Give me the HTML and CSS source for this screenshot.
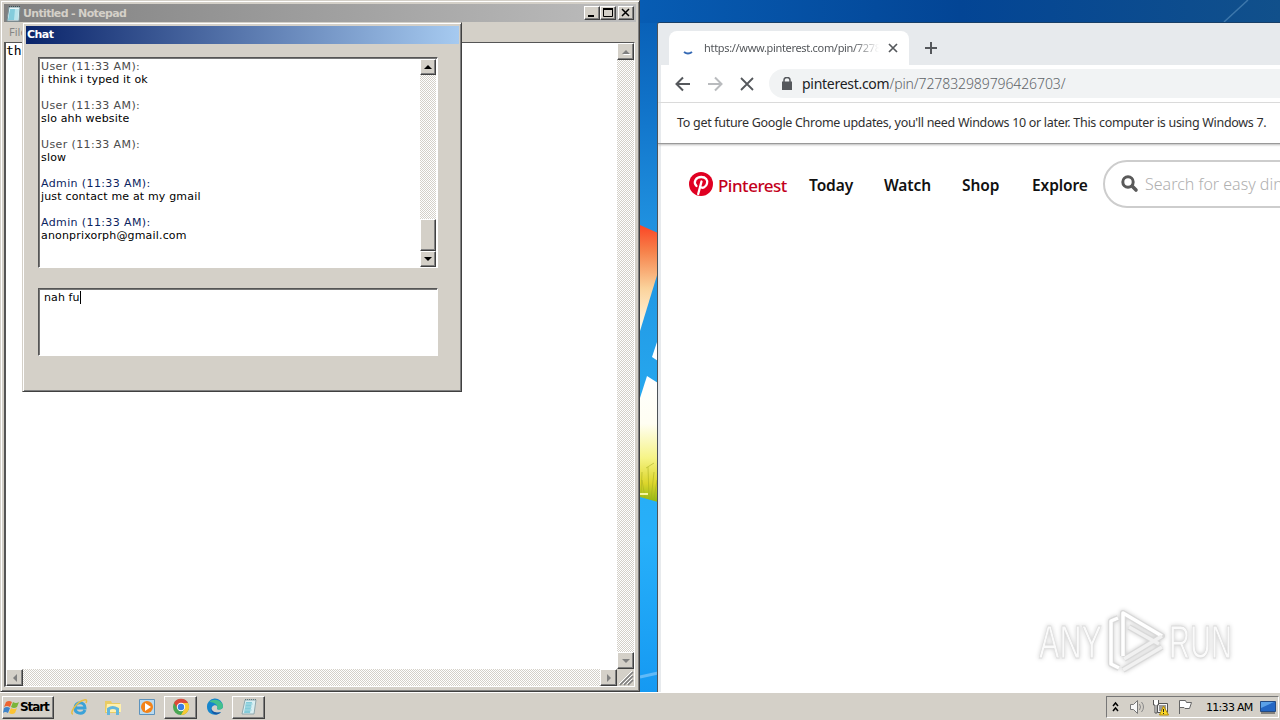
FILE: index.html
```
<!DOCTYPE html>
<html lang="en">
<head>
<meta charset="utf-8">
<title>Desktop</title>
<link rel="stylesheet" href="styles.css">
</head>
<body>
<div class="desktop">
  <svg class="wallpaper" width="1280" height="692" viewBox="0 0 1280 692">
    <defs>
      <linearGradient id="sky" x1="0" y1="0" x2="0" y2="1"><stop offset="0" stop-color="#075cb3"/><stop offset=".16" stop-color="#1174ca"/><stop offset=".32" stop-color="#1f90df"/><stop offset=".6" stop-color="#27aaf0"/><stop offset=".78" stop-color="#27b0fa"/><stop offset="1" stop-color="#1599f2"/></linearGradient>
      <linearGradient id="top"><stop offset="0" stop-color="#075cb3"/><stop offset=".5" stop-color="#034595"/><stop offset="1" stop-color="#11508b"/></linearGradient>
      <linearGradient id="red" x1="0" y1="0" x2="0" y2="1"><stop offset="0" stop-color="#fb4525"/><stop offset=".25" stop-color="#f6824b"/><stop offset=".6" stop-color="#fbd39c"/><stop offset="1" stop-color="#fffceb"/></linearGradient>
      <linearGradient id="yellow" x1="0" y1="0" x2="0" y2="1"><stop offset="0" stop-color="#fff"/><stop offset=".38" stop-color="#fffef2"/><stop offset=".65" stop-color="#f6f487"/><stop offset=".85" stop-color="#dcd62c"/><stop offset="1" stop-color="#8fb713"/></linearGradient>
    </defs>
    <path fill="url(#sky)" d="M640 0h18v692h-18z"/>
    <path fill="url(#top)" d="M640 0h640v23H640z"/>
    <path d="M1224 22L1248 0" stroke="#3d77ab" stroke-width="1.5"/>
    <path fill="url(#red)" d="M640 225l18 8v39l-18 59z"/>
    <path fill="#fff" d="M652 357l6-18v22z"/>
    <path fill="url(#yellow)" d="M640 398l7-22 11 7v119l-18-5z"/>
    <path d="M641 497l1-25m3 26l-3-18m7 19l-1-32m3 33l3-28m0 28l3-20M646 468l8-5" fill="none" stroke="#a8ae20" stroke-width=".8" opacity=".7"/>
    <path d="M640 494h8" stroke="#f5f5a0" stroke-width="2"/>
    <path d="M640 677l18-4" stroke="#60baf8" stroke-width="3"/>
  </svg>

  <section class="notepad">
    <header class="np-title">
      <svg width="16" height="17" viewBox="0 0 16 17"><path fill="#e9f6f8" stroke="#77919a" d="M3 2h11l-1 14H1z"/><path fill="#83ccdc" d="M4 4h6L9 15H2z"/><path fill="#b9e4ec" d="M9 4h4l-1 11H8z"/><path stroke="#404e52" stroke-dasharray="1 1" d="M3 1.500h12"/></svg>
      <span class="np-name">Untitled - Notepad</span>
      <div class="win-btns">
        <button class="btn3d"><svg width="14" height="12"><path fill="#000" d="M3 8h6v2H3z"/></svg></button>
        <button class="btn3d"><svg width="14" height="12"><path fill="none" stroke="#000" d="M2.500 2v7.500h9V1.500"/><path fill="#000" d="M2 1h10v2H2z"/></svg></button>
        <button class="btn3d close"><svg width="14" height="12"><path stroke="#000" stroke-width="1.500" d="M3 2l7 7M10 2L3 9"/></svg></button>
      </div>
    </header>
    <nav class="np-menu">File</nav>
    <div class="np-edit">
      <div class="np-text">this</div>
      <div class="track v"><i class="btn3d"><svg width="14" height="14"><path fill="#fff" d="M4 10h8L8 6z"/><path fill="#808080" d="M3 9h8L7 5z"/></svg></i><i class="btn3d"><svg width="14" height="14"><path fill="#808080" d="M3 5h8L7 9z"/></svg></i></div>
      <div class="track h"><i class="btn3d"><svg width="14" height="14"><path fill="#808080" d="M9 3v8L5 7z"/></svg></i><i class="btn3d"><svg width="14" height="14"><path fill="#808080" d="M5 3v8l4-4z"/></svg></i></div>
      <svg class="grip" width="17" height="17"><path stroke="#fff" d="M2 15L15 2M6 15l9-9M10 15l5-5"/><path stroke="#808080" stroke-width="1.600" d="M3 16L16 3M7 16l9-9M11 16l5-5"/></svg>
    </div>
  </section>

  <section class="chat">
    <header class="chat-title">Chat</header>
    <div class="chat-body">
      <div class="log sunken">
        <div class="messages">
          <p><b class="user">User (11:33 AM):</b><span>i think i typed it ok</span></p>
          <p><b class="user">User (11:33 AM):</b><span>slo ahh website</span></p>
          <p><b class="user">User (11:33 AM):</b><span>slow</span></p>
          <p><b class="admin">Admin (11:33 AM):</b><span>just contact me at my gmail</span></p>
          <p><b class="admin">Admin (11:33 AM):</b><span>anonprixorph@gmail.com</span></p>
        </div>
        <div class="track scroll"><i class="btn3d"><svg width="14" height="14"><path fill="#000" d="M3 9h8L7 5z"/></svg></i><i class="btn3d thumb"></i><i class="btn3d"><svg width="14" height="14"><path fill="#000" d="M3 5h8L7 9z"/></svg></i></div>
      </div>
      <div class="reply sunken"><span>nah fu</span><i class="caret"></i></div>
    </div>
  </section>

  <section class="chrome">
    <header class="tabs">
      <div class="tab">
        <svg width="16" height="16"><path fill="none" stroke="#3569b4" stroke-width="2" d="M4 12q4 3 8 0"/></svg>
        <span class="tab-url">https://www.pinterest.com/pin/7278</span>
        <svg width="10" height="10"><path stroke="#55585c" stroke-width="1.700" d="M1 1l8 8M9 1L1 9"/></svg>
      </div>
      <svg class="plus" width="14" height="14"><path stroke="#55585c" stroke-width="2" d="M7 1v12M1 7h12"/></svg>
    </header>
    <div class="toolbar">
      <svg width="16" height="16"><path fill="none" stroke="#55585c" stroke-width="2" d="M15 8H2M8 1.500L1.500 8 8 14.500"/></svg>
      <svg width="16" height="16"><path fill="none" stroke="#b9bbbe" stroke-width="2" d="M1 8h13M8 1.500L14.500 8 8 14.500"/></svg>
      <svg width="16" height="16"><path stroke="#55585c" stroke-width="1.800" d="M2 2l12 12M14 2L2 14"/></svg>
      <div class="omnibox"><svg width="10" height="13"><path fill="#55585c" d="M0 4.500h10V13H0z"/><path fill="none" stroke="#55585c" stroke-width="1.500" d="M2 5V3a3 2.500 0 0 1 6 0v2"/></svg><span class="address">pinterest.com<em>/pin/727832989796426703/</em></span></div>
    </div>
    <div class="infobar"><span>To get future Google Chrome updates, you'll need Windows 10 or later. This computer is using Windows 7.</span></div>
    <main class="page">
      <nav class="site-nav">
        <svg width="24" height="24" viewBox="0 0 24 24"><circle cx="12" cy="12" r="12" fill="#e00022"/><path fill="none" stroke="#fff" stroke-width="2.300" stroke-linecap="round" d="M7.500 14C3.700 10 7 5 12.300 5c4.500 0 6.600 3 5.700 6.500-.8 3.500-4.500 5.500-6.700 3.200M12.500 9.500L9.200 22"/></svg>
        <span class="brand">Pinterest</span>
        <a class="l1">Today</a><a class="l2">Watch</a><a class="l3">Shop</a><a class="l4">Explore</a>
        <div class="search"><svg width="18" height="18"><circle cx="7" cy="7" r="5.200" fill="none" stroke="#5a5a5a" stroke-width="3"/><path stroke="#5a5a5a" stroke-width="3.600" stroke-linecap="round" d="M11.500 11.500l3.500 3.500"/></svg><span>Search for easy dinners</span></div>
      </nav>
    </main>
  </section>

  <svg class="watermark" width="210" height="74" viewBox="0 0 210 74">
    <g fill="none" stroke="#d9d9d9" stroke-width="6" stroke-linejoin="round"><path d="M87 12l-7 3v43l8 4M92 50V7l39 23-38 23M98 21l30 17M92 64l39-23"/></g>
    <g fill="none" stroke="#fff" stroke-width="3.500" stroke-linejoin="round"><path d="M87 12l-7 3v43l8 4M92 50V7l39 23"/></g>
    <g fill="none" stroke="#f1f1f1" stroke-width="3.500"><path d="M131 30L93 53M98 21l30 17M92 64l39-23"/></g>
    <text x="8" y="52" textLength="63" lengthAdjust="spacingAndGlyphs">ANY</text>
    <text x="138" y="52" textLength="63" lengthAdjust="spacingAndGlyphs">RUN</text>
  </svg>

  <footer class="taskbar">
    <button class="start btn3d"><svg width="17" height="17" viewBox="0 0 17 17"><path fill="#ed6532" d="M3 3q3-2 6 0L7 8Q4 6 1 8z"/><path fill="#7bb53a" d="M10 3q3 2 6 0l-2 5q-3 2-6 0z"/><path fill="#3f84c9" d="M1 9q3-2 6 0l-2 5q-3-2-5 0z"/><path fill="#fbc334" d="M8 9q3 2 6 0l-2 5q-3 2-6 0z"/></svg><span>Start</span></button>
    <div class="launch">
      <div class="app"><svg width="18" height="18" viewBox="0 0 18 18"><path fill="none" stroke="#3ba2d8" stroke-width="3" d="M15 12c-2 5-10 4-10-2 0-7 10-7 10 0H5"/><path fill="none" stroke="#e7bd43" stroke-width="1.500" d="M3 16C-1 16 6 4 14 2c3-1 3 1 2 3"/></svg></div>
      <div class="app"><svg width="18" height="18" viewBox="0 0 18 18"><path fill="#e9cb64" d="M1 3h6l1 2h8v10H1z"/><path fill="#fff0ac" d="M3 6h14v8H2z"/><path fill="none" stroke="#63b6dc" stroke-width="3" d="M4.500 17v-6q4-3 9 0v6"/></svg></div>
      <div class="app"><svg width="18" height="18" viewBox="0 0 18 18"><path fill="#b9daf0" stroke="#5d93bd" d="M1.500 1.500h15v15h-15z"/><circle cx="9" cy="9" r="6" fill="#f38318"/><path fill="#fff" d="M7 5l6 4-6 4z"/></svg></div>
      <div class="app btn3d"><svg width="18" height="18" viewBox="0 0 18 18"><circle cx="9" cy="9" r="8" fill="#4aa753"/><path fill="#dc493a" d="M2 5a8 8 0 0 1 14 0H9L6 11z"/><path fill="#f9c933" d="M9 5h7a8 8 0 0 1-7 12l4-7z"/><circle cx="9" cy="9" r="4.200" fill="#fff"/><circle cx="9" cy="9" r="3.200" fill="#397ee6"/></svg></div>
      <div class="app"><svg width="18" height="18" viewBox="0 0 18 18"><path fill="#1786cc" d="M1 9a8 8 0 0 1 16-1c0 4-4 4-6 3 2-4-3-5-5-2-2 4 3 7 9 5-4 5-14 3-14-5z"/><path fill="#43c08d" d="M3 4c5-5 14-1 14 4 0 4-4 4-6 3 2-4-3-7-8-7z"/><path fill="#1558a4" d="M6 8c-2 4 2 8 9 6-4 5-12 2-9-6z"/></svg></div>
      <div class="app btn3d"><svg width="18" height="18" viewBox="0 0 18 18"><path fill="#d9eff2" stroke="#91a7ac" d="M5 2h11l-2 14H2z"/><path fill="#83cbd9" d="M6 4h6l-2 11H4z"/><path stroke="#607a80" stroke-dasharray="1 1" d="M5 1.500h12"/><path stroke="#a9dbe4" d="M6 6h7M5 9h7M5 12h7"/></svg></div>
    </div>
    <div class="tray">
      <svg width="7" height="12"><path fill="none" stroke="#000" stroke-width="1.500" d="M1 5l2.500-3L6 5M1 10l2.500-3L6 10"/></svg>
      <svg width="17" height="16"><path fill="#f8f8f8" stroke="#777" d="M1.500 5.500h3l4-4v13l-4-4h-3z"/><path fill="none" stroke="#888" d="M10.500 5q2 3 0 6M12.500 3q4 5 0 10"/></svg>
      <svg class="net" width="17" height="17"><path fill="#f7f7f7" stroke="#555" d="M5.500 4.500h10v9h-10z"/><path fill="#999" d="M7 6h7v6H7z"/><path fill="#fff" stroke="#555" d="M1.500 1v5h1.500v8h2V6h1.500V1"/><path fill="#fbd827" stroke="#b38b0b" d="M11.500 7l5 9h-9z"/><path stroke="#222" d="M11.500 10v3m0 1v1"/></svg>
      <svg class="flag" width="16" height="16"><path fill="#fff" stroke="#666" d="M2.500 15V1.500h6l1 2h5l-2 6H8l-1-1H2.500"/></svg>
      <span class="clock">11:33 AM</span>
      <svg class="desk" width="16" height="13"><path fill="#2467c4" stroke="#244b83" d="M.5.5h15v10H.5z"/><path fill="#5ba1e8" d="M1 1h13L1 7z"/><path stroke="#333" d="M1 12h14"/></svg>
    </div>
  </footer>
</div>
</body>
</html>
```
FILE: styles.css
```
*{box-sizing:border-box}
body{margin:0;overflow:hidden}
button{padding:0;font:inherit}
svg{display:block;flex:none}
.desktop{position:relative;width:1280px;height:720px;overflow:hidden;background:#168bdc;font-family:"DejaVu Sans",sans-serif}
.wallpaper{position:absolute;left:0;top:0}
.btn3d{display:flex;align-items:center;justify-content:center;background:#d4d0c8;border:1px solid;border-color:#fff #404040 #404040 #fff;box-shadow:inset -1px -1px #808080;font-style:normal;flex:none}
.track{display:flex;justify-content:space-between;background:repeating-conic-gradient(#d4d0c8 0 25%,#fff 0 50%) 0 0/2px 2px}

.notepad{position:absolute;left:0;top:0;width:640px;height:692px;background:#d4d0c8;border:1px solid;border-color:#d4d0c8 #404040 #404040 #d4d0c8;box-shadow:inset 1px 1px #fff,inset -1px -1px #808080;padding:3px}
.np-title{height:18px;display:flex;align-items:center;padding:0 2px;background:linear-gradient(90deg,#808080,#bdbdbd)}
.np-name{margin-left:1px;font:bold 11px "DejaVu Sans",sans-serif;letter-spacing:-.66px;color:#d4d0c8;flex:1}
.win-btns{display:flex}
.win-btns .btn3d{width:16px;height:14px}
.win-btns .close{margin-left:2px}
.np-menu{height:20px;padding:3px 5px;font:11px/14px "Noto Sans",sans-serif;color:#858585}
.np-edit{display:grid;grid-template:1fr 17px/1fr 17px;height:645px;margin-right:1px;border:1px solid;border-color:#555 #fff #fff #555;border-width:1px 1px 1px 2px;background:#fff}
.np-text{font:13px/15px "DejaVu Sans Mono",monospace}
.v{flex-direction:column}
.v .btn3d,.h .btn3d{width:17px;height:17px}
.grip{background:#d4d0c8}

.chat{position:absolute;left:22px;top:22px;width:440px;height:370px;background:#d4d0c8;border:1px solid;border-color:#d4d0c8 #404040 #404040 #d4d0c8;box-shadow:inset 1px 1px #fff,inset -1px -1px #808080;padding:3px 2px 2px 3px}
.chat-title{height:18px;background:linear-gradient(90deg,#0a246a,#a6caf0);font:bold 11px/18px "DejaVu Sans",sans-serif;letter-spacing:-.55px;color:#fff;padding-left:1px}
.chat-body{padding:13px 21px 0 12px;display:grid;gap:20px}
.sunken{background:#fff;border:1px solid;border-color:#555 #fff #fff #555;box-shadow:inset 1px 1px #777}
.log{display:flex;height:211px;padding:1px 1px 0 1px}
.messages{flex:1;padding:1px 1px;font-size:11px;line-height:13px;letter-spacing:.17px}
.messages p{margin:0 0 13px;display:grid}
.messages b{font-weight:normal;letter-spacing:.38px}
.user{color:#4b4b4b}.admin{color:#0b2460}
.scroll{width:16px;flex-direction:column}
.scroll .btn3d{width:16px;height:16px}
.scroll .thumb{height:32px;margin-top:auto}
.reply{height:68px;padding:2px 5px;font-size:11px;line-height:13px;letter-spacing:.1px;display:flex}
.caret{width:1px;height:13px;background:#000}

.chrome{position:absolute;left:657px;top:22px;width:640px;height:671px;background:#fff;border:1px solid #4d5358;border-top-color:#183f67;border-radius:3px 0 0;overflow:hidden;box-shadow:inset 3px 0 #e7eaed}
.tabs{height:42px;background:#e7eaed;display:flex;align-items:flex-end;padding-left:11px}
.tab{width:240px;height:34px;background:#fff;border-radius:8px 8px 0 0;display:flex;align-items:center;padding:0 11px}
.tab-url{margin:-2px 9px 0 8px;width:176px;font:11px "Noto Sans",sans-serif;letter-spacing:-.32px;white-space:nowrap;overflow:hidden;color:#55585c;mask-image:linear-gradient(90deg,#000 85%,transparent)}
.plus{margin:0 0 10px 15px}
.toolbar{height:38px;border-bottom:1px solid #ddd;display:flex;align-items:center;gap:16px;padding-left:17px}
.omnibox{flex:1;height:29px;margin-left:-2px;border-radius:15px;background:#f1f3f4;display:flex;align-items:center;padding-left:13px;gap:10px}
.address{font:14px "Noto Sans",sans-serif;letter-spacing:-.28px;color:#202124;white-space:nowrap}
.address em{font-style:normal;font-weight:300;letter-spacing:-.1px;color:#606468}
.infobar{height:41px;display:flex;align-items:center;padding:0 0 2px 19px;font:12.500px "Noto Sans",sans-serif;letter-spacing:-.3px;color:#303030;white-space:nowrap;border-bottom:1px solid #999;box-shadow:0 1px 2px #bbb}
.page{padding:16px 0 0 31px}
.site-nav{display:flex;align-items:center;height:48px;font:600 15.500px "Noto Sans",sans-serif;color:#111;white-space:nowrap}
.site-nav>*{flex:none}
.brand{width:71px;margin:3px 20px 0 5px;font-size:17px;font-weight:500;letter-spacing:-.5px;color:#c3001c}
.site-nav a{padding-top:2px;letter-spacing:-.1px}
.l1{width:75px}.l2{width:78px}.l3{width:70px}.l4{width:71px}
.search{width:220px;height:48px;border:2px solid #cdcdcd;border-radius:24px;display:flex;align-items:center;gap:6px;padding-left:16px;font-weight:300;font-size:16px;color:#b0b0b0}
.watermark{position:absolute;left:1031px;top:606px;filter:drop-shadow(0 0 2px #ccc)}
.watermark text{font:46px "Liberation Sans",sans-serif;fill:#fafafa;stroke:#ddd;stroke-width:.8}

.taskbar{position:absolute;left:0;top:692px;width:1280px;height:28px;background:#d4d0c8;border-top:1px solid #fff;display:flex;align-items:center;padding:1px 1px 0 2px}
.start{width:52px;height:23px;justify-content:flex-start;padding-left:0;font:bold 12px "DejaVu Sans",sans-serif;letter-spacing:-1.1px}
.launch{display:flex;margin-left:8px;gap:1px}
.app{display:flex;align-items:center;justify-content:center;width:33px;height:23px}
.tray{margin-left:auto;width:173px;height:22px;border:1px solid;border-color:#777 #fff #fff #777;display:flex;align-items:center;padding-left:5px}
.tray svg+svg{margin-left:10px}
.tray .net{margin-left:6px}.tray .flag{margin-left:8px}
.clock{font-size:11px;letter-spacing:-.7px;margin-left:13px;width:47px;white-space:nowrap}
.tray .desk{margin-left:7px}
```
